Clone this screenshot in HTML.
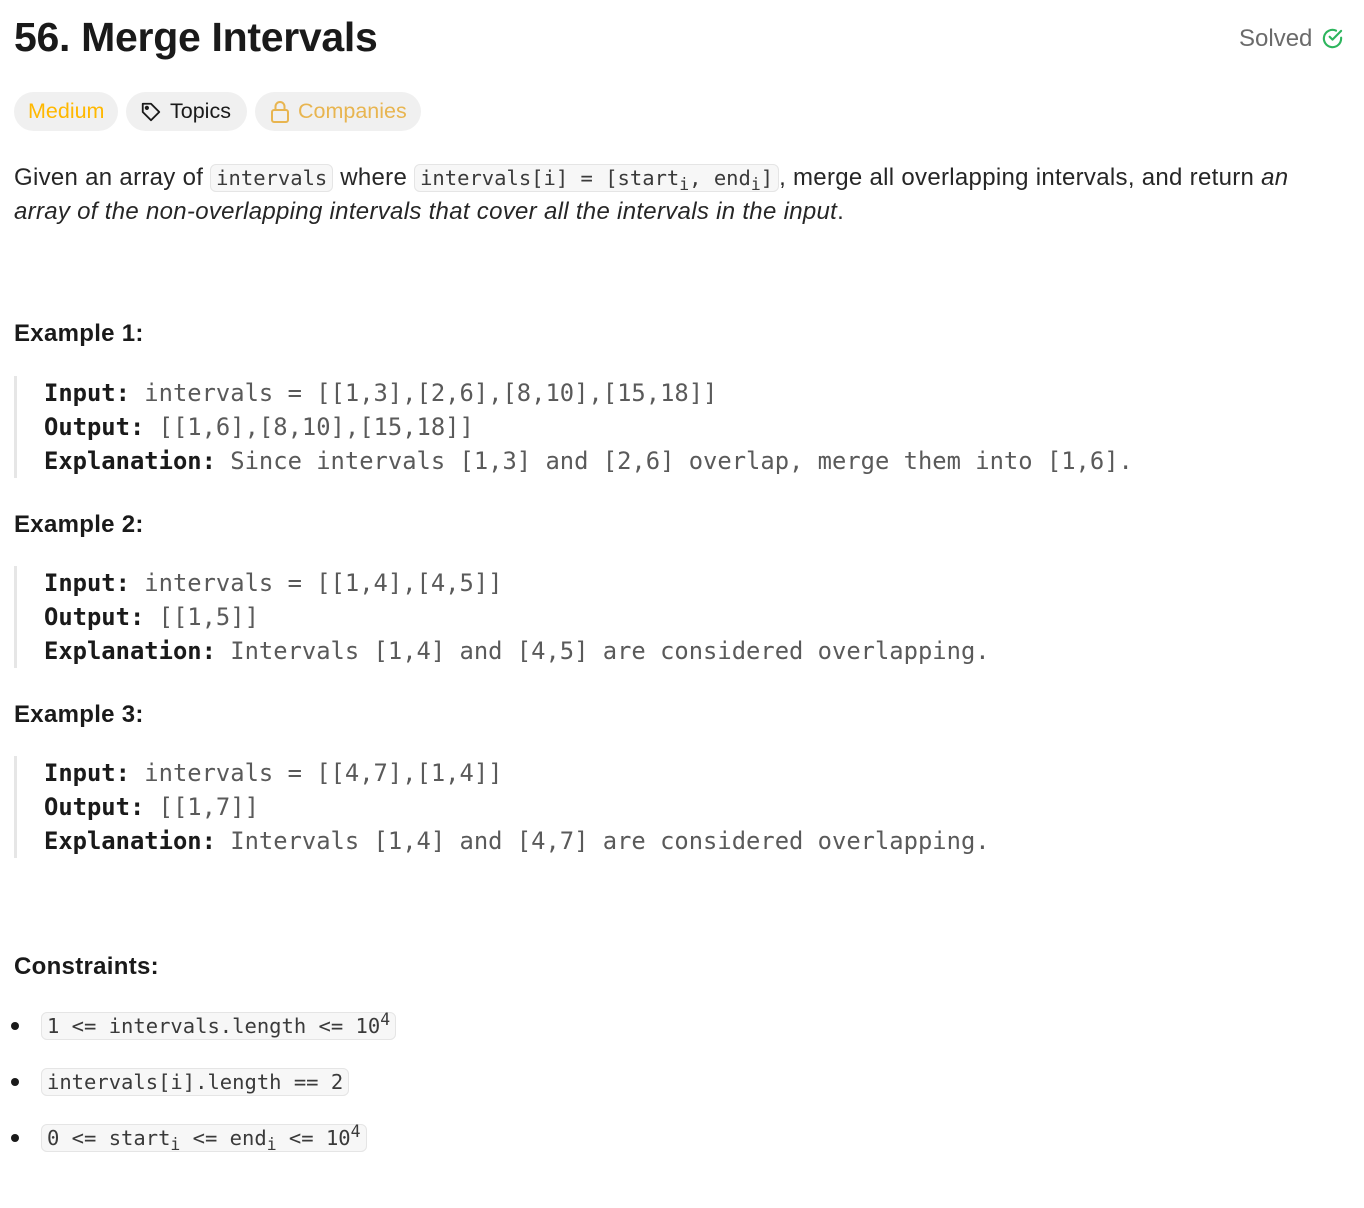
<!DOCTYPE html>
<html><head><meta charset="utf-8"><style>
body{margin:0;background:#fff;width:1364px;height:1208px;position:relative;font-family:"Liberation Sans",sans-serif;color:#262626;overflow:hidden}
.a{position:absolute;white-space:nowrap}
h1{position:absolute;left:14px;top:14px;margin:0;font-size:41px;font-weight:bold;color:#1a1a1a;letter-spacing:-0.3px}
.pill{position:absolute;top:92px;height:39px;border-radius:20px;background:#f0f0f0;font-size:21.5px;line-height:39px;box-sizing:border-box;padding:0 14px}
code{font-family:"DejaVu Sans Mono",monospace;font-size:20.5px;background:#f7f7f7;border:1px solid #e5e5e5;border-radius:6px;padding:1px 5px;color:#3a3a3a;letter-spacing:0}
.p{font-size:24px;line-height:34px;left:14px;letter-spacing:0.3px}
.h{font-size:24px;font-weight:bold;left:14px;color:#1a1a1a;letter-spacing:0.3px}
.bq{position:absolute;left:14px;width:3px;background:#e6e6e6}
.pre{position:absolute;left:44px;font-family:"DejaVu Sans Mono",monospace;font-size:23.8px;line-height:34px;color:#5a5a5a;white-space:pre;margin:0}
.pre b{color:#1a1a1a}
.dot{position:absolute;left:11px;width:8px;height:8px;border-radius:50%;background:#1a1a1a}
sub{font-size:0.8em;vertical-align:-0.3em;line-height:0}
sup{font-size:0.8em;vertical-align:0.5em;line-height:0}
</style></head><body>
<h1>56. Merge Intervals</h1>
<div class="a" style="left:1239px;top:25px;font-size:24px;color:#6b6b6b">Solved</div>
<svg class="a" style="left:1321px;top:27px" width="23" height="23" viewBox="0 0 24 24" fill="none" stroke="#2db55d" stroke-width="2.2" stroke-linecap="round" stroke-linejoin="round"><path d="M21 11.1V12a9 9 0 1 1-5.3-8.2"/><path d="M21 4 12 13.2l-3-3"/></svg>
<div class="pill" style="left:14px;width:104px;color:#ffb800">Medium</div>
<div class="pill" style="left:126px;width:121px;color:#1a1a1a;padding-left:44px">Topics</div>
<svg class="a" style="left:139px;top:101px" width="24" height="22" viewBox="0 0 24 24" fill="none" stroke="#1a1a1a" stroke-width="2" stroke-linejoin="round"><path d="M3 3h9l9 9-9 9-9-9z"/><circle cx="7.5" cy="7.5" r="1.3" fill="#1a1a1a"/></svg>
<div class="pill" style="left:255px;width:166px;color:#e8b550;padding-left:43px">Companies</div>
<svg class="a" style="left:270px;top:100px" width="20" height="24" viewBox="0 0 20 24" fill="none" stroke="#e8b550" stroke-width="2"><rect x="2" y="10" width="16" height="12" rx="2"/><path d="M5.5 10V6.5a4.5 4.5 0 0 1 9 0V10"/></svg>
<div class="a p" style="top:161px">Given an array of <code>intervals</code> where <code>intervals[i] = [start<sub>i</sub>, end<sub>i</sub>]</code>, merge all overlapping intervals, and return <i>an</i></div>
<div class="a p" style="top:195px"><i>array of the non-overlapping intervals that cover all the intervals in the input</i>.</div>

<div class="a h" style="top:320px">Example 1:</div>
<div class="bq" style="top:376px;height:102px"></div>
<pre class="pre" style="top:376px"><b>Input:</b> intervals = [[1,3],[2,6],[8,10],[15,18]]
<b>Output:</b> [[1,6],[8,10],[15,18]]
<b>Explanation:</b> Since intervals [1,3] and [2,6] overlap, merge them into [1,6].</pre>

<div class="a h" style="top:511px">Example 2:</div>
<div class="bq" style="top:566px;height:102px"></div>
<pre class="pre" style="top:566px"><b>Input:</b> intervals = [[1,4],[4,5]]
<b>Output:</b> [[1,5]]
<b>Explanation:</b> Intervals [1,4] and [4,5] are considered overlapping.</pre>

<div class="a h" style="top:701px">Example 3:</div>
<div class="bq" style="top:756px;height:102px"></div>
<pre class="pre" style="top:756px"><b>Input:</b> intervals = [[4,7],[1,4]]
<b>Output:</b> [[1,7]]
<b>Explanation:</b> Intervals [1,4] and [4,7] are considered overlapping.</pre>

<div class="a h" style="top:953px">Constraints:</div>
<div class="dot" style="top:1022px"></div>
<div class="a" style="left:41px;top:1014px"><code>1 &lt;= intervals.length &lt;= 10<sup>4</sup></code></div>
<div class="dot" style="top:1078px"></div>
<div class="a" style="left:41px;top:1070px"><code>intervals[i].length == 2</code></div>
<div class="dot" style="top:1134px"></div>
<div class="a" style="left:41px;top:1126px"><code>0 &lt;= start<sub>i</sub> &lt;= end<sub>i</sub> &lt;= 10<sup>4</sup></code></div>
</body></html>
